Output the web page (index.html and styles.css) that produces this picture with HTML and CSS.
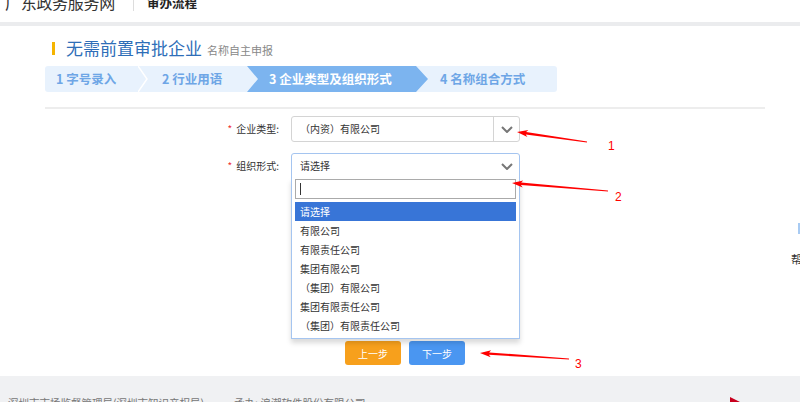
FILE: index.html
```html
<!DOCTYPE html>
<html lang="zh-CN">
<head>
    <meta charset="UTF-8">
    <title>审办流程 - 无需前置审批企业</title>
    <link rel="stylesheet" href="styles.css">
</head>
<body>
    <!-- top bar -->
    <div class="topbar">
        <div class="topbar-inner">
            <span class="brand">广东政务服务网</span>
            <span class="topbar-sep"></span>
            <span class="topbar-title">审办流程</span>
        </div>
    </div>

    <div class="main">
        <div class="page-title">
            <span class="title-mark"></span>
            <h1>无需前置审批企业</h1>
            <span class="title-sub">名称自主申报</span>
        </div>

        <div class="steps">
            <div class="step step-1">1 字号录入</div>
            <svg class="step-sep" width="10" height="26" viewBox="0 0 10 26">
                <polyline points="0,0 9,13 0,26" fill="none" stroke="#ffffff" stroke-width="1.5"/>
            </svg>
            <div class="step step-2">2 行业用语</div>
            <div class="step step-3 active">3 企业类型及组织形式</div>
            <div class="step step-4">4 名称组合方式</div>
        </div>

        <div class="divider"></div>

        <form class="form">
            <div class="form-row">
                <label class="form-label"><i>*</i>企业类型:</label>
                <div class="select select-locked">
                    <span class="select-value">（内资）有限公司</span>
                    <span class="select-btn">
                        <svg width="12" height="7" viewBox="0 0 12 7"><polyline points="1,1 6,6 11,1" fill="none" stroke="#777" stroke-width="2"/></svg>
                    </span>
                </div>
            </div>
            <div class="form-row">
                <label class="form-label"><i>*</i>组织形式:</label>
                <div class="select select-open">
                    <span class="select-value">请选择</span>
                    <span class="select-btn">
                        <svg width="12" height="7" viewBox="0 0 12 7"><polyline points="1,1 6,6 11,1" fill="none" stroke="#777" stroke-width="2"/></svg>
                    </span>
                    <div class="dropdown">
                        <div class="dropdown-search"><span class="caret"></span></div>
                        <ul class="dropdown-list">
                            <li class="selected">请选择</li>
                            <li>有限公司</li>
                            <li>有限责任公司</li>
                            <li>集团有限公司</li>
                            <li>（集团）有限公司</li>
                            <li>集团有限责任公司</li>
                            <li>（集团）有限责任公司</li>
                        </ul>
                    </div>
                </div>
            </div>
            <div class="form-actions">
                <button type="button" class="btn btn-prev">上一步</button>
                <button type="button" class="btn btn-next">下一步</button>
            </div>
        </form>
    </div>

    <div class="footer">
        <span>深圳市市场监督管理局(深圳市知识产权局)</span>
        <span class="footer-org">承办: 浪潮软件股份有限公司</span>
        <span class="footer-flag"></span>
    </div>

    <!-- floating side tools -->
    <div class="side-tools">
        <span class="side-line"></span>
        <span class="side-help">帮助</span>
    </div>

    <!-- red annotation arrows -->
    <svg class="marks" width="800" height="402" viewBox="0 0 800 402">
        <polygon points="517,132 527.4,137 525.7,134.5 586.9,142.4 587.1,141.6 526.1,132.1 528.4,130.1" fill="#f00"/>
        <polygon points="512,183 522.7,187.4 520.9,185 608,191.4 608,190.6 521.1,182.6 523.3,180.4" fill="#f00"/>
        <polygon points="480,353 490.7,357.2 488.9,354.8 569,359.4 569,358.6 489.1,352.4 491.2,350.2" fill="#f00"/>
        <text x="608" y="150">1</text>
        <text x="615" y="201">2</text>
        <text x="575" y="368">3</text>
    </svg>
</body>
</html>
```

FILE: styles.css
```css
/* page */
html, body {
    overflow: hidden;
}

body {
    margin: 0;
    padding: 0;
    position: relative;
    width: 800px;
    height: 402px;
    font-family: "Noto Sans CJK SC", "Liberation Sans", sans-serif;
    color: #333;
    background-color: #fff;
}

/* top bar */
.topbar {
    height: 22px;
    border-bottom: 4px solid #ebecee;
    overflow: hidden;
}

.topbar-inner {
    display: flex;
    align-items: center;
    height: 16px;
    margin-top: -6px;
    padding-left: 5px;
}

.brand {
    font-size: 16px;
    line-height: 16px;
    letter-spacing: -0.3px;
    color: #333;
}

.topbar-sep {
    width: 1px;
    height: 18px;
    background-color: #ddd;
    margin-left: 18px;
}

.topbar-title {
    margin-left: 13px;
    margin-top: 1px;
    font-size: 12.5px;
    line-height: 16px;
    font-weight: bold;
    color: #222;
}

/* main */
.main {
    width: 720px;
    margin-left: 45px;
}

.page-title {
    display: flex;
    align-items: center;
    height: 20px;
    margin-top: 12px;
}

.title-mark {
    width: 3px;
    height: 13px;
    background-color: #f5b400;
    margin-left: 7px;
    margin-right: 11px;
}

.page-title h1 {
    margin: 0;
    font-size: 17px;
    line-height: 20px;
    font-weight: normal;
    color: #2e6eb8;
}

.title-sub {
    margin-left: 5px;
    margin-top: 3px;
    font-size: 11px;
    line-height: 14px;
    color: #888;
}

/* steps */
.steps {
    display: flex;
    width: 512px;
    height: 26px;
    margin-top: 8px;
    background-color: #e8f2fd;
    border-radius: 3px;
    overflow: hidden;
}

.step {
    box-sizing: border-box;
    font-size: 12.5px;
    line-height: 26px;
    font-weight: bold;
    color: #6ea6e6;
    white-space: nowrap;
    flex-shrink: 0;
}

.step-sep {
    flex-shrink: 0;
}

.step-1 {
    width: 93px;
    padding-left: 11px;
}

.step-2 {
    width: 99px;
    padding-left: 14px;
}

.step-3 {
    width: 181px;
    padding-left: 22px;
}

.step-4 {
    flex: 1;
    padding-left: 12px;
}

.step.active {
    background-color: #7cb4ef;
    color: #fff;
    clip-path: polygon(0 0, calc(100% - 12px) 0, 100% 50%, calc(100% - 12px) 100%, 0 100%, 11px 50%);
}

.divider {
    height: 2px;
    margin-top: 15px;
    background-color: #ededed;
}

/* form */
.form {
    padding-top: 7px;
    font-size: 10px;
}

.form-row {
    display: flex;
    align-items: center;
    margin-bottom: 11px;
}

.form-label {
    box-sizing: border-box;
    width: 246px;
    padding-right: 12px;
    text-align: right;
    line-height: 14px;
    color: #333;
}

.form-label i {
    font-style: normal;
    color: #e33;
    margin-right: 4px;
}

.select {
    position: relative;
    box-sizing: border-box;
    display: flex;
    align-items: center;
    width: 229px;
    height: 26px;
    padding-left: 8px;
    border: 1px solid #d4d4d4;
    border-radius: 3px;
    background-color: #fff;
    line-height: 14px;
}

.select-btn {
    position: absolute;
    top: 0;
    right: 0;
    bottom: 0;
    width: 25px;
    display: flex;
    align-items: center;
    justify-content: center;
}

.select-locked .select-btn {
    border-left: 1px solid #d4d4d4;
}

.select-open {
    border-color: #a5c5f0;
    border-radius: 3px 3px 0 0;
}

.dropdown {
    position: absolute;
    top: 24px;
    left: -1px;
    right: -1px;
    z-index: 5;
    padding: 0 3px 3px;
    background-color: #fff;
    border: 1px solid #a5c5f0;
    border-top: none;
    box-shadow: 0 4px 5px rgba(0, 0, 0, 0.15);
}

.dropdown-search {
    box-sizing: border-box;
    height: 20px;
    margin-top: 1px;
    padding: 3px 4px;
    border: 1px solid #aaa;
}

.caret {
    display: block;
    width: 1px;
    height: 12px;
    background-color: #333;
}

.dropdown-list {
    list-style: none;
    margin: 3px 0 0;
    padding: 0;
}

.dropdown-list li {
    height: 19px;
    line-height: 19px;
    padding-left: 5px;
    color: #333;
}

.dropdown-list li.selected {
    background-color: #3875d7;
    color: #fff;
}

.form-actions {
    display: flex;
    justify-content: center;
    gap: 8px;
    margin-top: 162px;
}

.btn {
    width: 56px;
    height: 24px;
    border: none;
    border-radius: 3px;
    font-family: inherit;
    font-size: 10px;
    color: #fff;
    cursor: pointer;
}

.btn-prev {
    background-color: #f7a01c;
}

.btn-next {
    background-color: #4a96f1;
}

/* footer */
.footer {
    display: flex;
    height: 40px;
    margin-top: 11px;
    padding: 20px 0 0 8px;
    background-color: #f0f1f3;
    font-size: 10.5px;
    line-height: 14px;
    color: #777;
}

.footer-org {
    margin-left: 30px;
}

.footer-flag {
    width: 0;
    height: 0;
    margin-left: auto;
    margin-right: 60px;
    margin-top: 1px;
    border-left: 10px solid #c8001e;
    border-top: 5px solid transparent;
    border-bottom: 5px solid transparent;
}

/* side tools */
.side-tools {
    position: absolute;
    left: 791px;
    top: 223px;
    width: 30px;
}

.side-line {
    display: block;
    width: 2px;
    height: 11px;
    margin-left: 7px;
    background-color: #a8cbf3;
}

.side-help {
    display: block;
    margin-top: 18px;
    font-size: 11px;
    line-height: 14px;
    color: #333;
    white-space: nowrap;
}

/* annotations */
.marks {
    position: absolute;
    top: 0;
    left: 0;
    pointer-events: none;
    z-index: 10;
}

.marks text {
    font-family: "Liberation Sans", sans-serif;
    font-size: 12px;
    fill: #f00;
}
```
